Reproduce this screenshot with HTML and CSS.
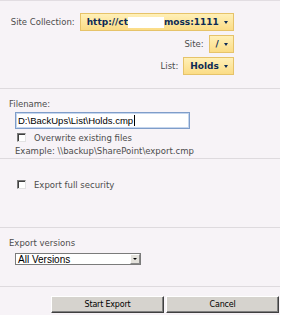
FILE: index.html
```html
<!DOCTYPE html>
<html>
<head>
<meta charset="utf-8">
<link rel="stylesheet" href="styles.css">
</head>
<body>
<div class="panel">
  <div class="section sel-section">
    <div class="sel-row">
      <span class="lbl">Site Collection:</span>
      <span class="ybtn">http://ct<span class="redact"></span>moss:1111 <span class="caret"></span></span>
    </div>
    <div class="sel-row">
      <span class="lbl">Site:</span>
      <span class="ybtn">/ <span class="caret"></span></span>
    </div>
    <div class="sel-row">
      <span class="lbl">List:</span>
      <span class="ybtn">Holds <span class="caret"></span></span>
    </div>
  </div>
  <div class="section file-section">
    <div class="lbl">Filename:</div>
    <div class="input">D:\BackUps\List\Holds.cmp<span class="cursor"></span></div>
    <div class="check-row"><span class="cb"></span><span class="lbl">Overwrite existing files</span></div>
    <div class="lbl example">Example: \\backup\SharePoint\export.cmp</div>
  </div>
  <div class="section sec-section">
    <div class="check-row"><span class="cb"></span><span class="lbl">Export full security</span></div>
  </div>
  <div class="section ver-section">
    <div class="lbl">Export versions</div>
    <div class="select"><span class="sel-text">All Versions</span><span class="sel-arrow"><span class="tri"></span></span></div>
  </div>
  <div class="buttons">
    <span class="gbtn start">Start Export</span>
    <span class="gbtn cancel">Cancel</span>
  </div>
</div>
</body>
</html>
```
FILE: styles.css
```css
html, body {
  margin: 0;
  padding: 0;
  background: #ffffff;
}
.panel {
  width: 280px;
  height: 315px;
  background: #f7f3f7;
  border-top: 1px solid #e2dde2;
  box-sizing: border-box;
  font-family: "DejaVu Sans", Verdana, sans-serif;
  font-size: 8.5px;
  color: #4c4c4c;
  display: flex;
  flex-direction: column;
}
.section {
  border-bottom: 1px solid #dedade;
  box-sizing: border-box;
}
.sel-section {
  height: 88px;
  padding: 12px 46px 0 0;
  display: flex;
  flex-direction: column;
  align-items: flex-end;
  gap: 4px;
}
.sel-row {
  display: flex;
  align-items: center;
  gap: 5px;
}
.ybtn {
  height: 18px;
  box-sizing: border-box;
  border: 1px solid #e6c36a;
  background: linear-gradient(#fff0b8, #fbdc86);
  padding: 0 5px 0 6px;
  display: flex;
  align-items: center;
  font-family: "DejaVu Sans", Verdana, sans-serif;
  font-weight: bold;
  font-size: 9px;
  color: #0c2a55;
  white-space: pre;
}
.redact {
  display: inline-block;
  width: 36px;
  height: 11px;
  background: #ffffff;
}
.caret {
  display: inline-block;
  width: 0;
  height: 0;
  border-left: 2.5px solid transparent;
  border-right: 2.5px solid transparent;
  border-top: 3px solid #0c2a55;
  margin-left: 2px;
}
.file-section {
  height: 70px;
  padding: 10px 0 0 9px;
  display: flex;
  flex-direction: column;
}
.input {
  margin: 3px 0 0 6px;
  width: 175px;
  height: 17px;
  box-sizing: border-box;
  border: 1px solid #7f9dc9;
  box-shadow: inset 0 0 0 1px #c5d6ee;
  background: #ffffff;
  font-family: "Liberation Sans", Arial, sans-serif;
  font-size: 9.5px;
  color: #000000;
  display: flex;
  align-items: center;
  padding-left: 2px;
}
.cursor {
  display: inline-block;
  width: 1px;
  height: 11px;
  background: #000;
  margin-left: 1px;
}
.check-row {
  display: flex;
  align-items: center;
  gap: 8px;
  margin-left: 8px;
  height: 13px;
  margin-top: 2px;
}
.cb {
  width: 9px;
  height: 9px;
  box-sizing: border-box;
  background: #ffffff;
  border-top: 1px solid #7a7a7a;
  border-left: 1px solid #7a7a7a;
  border-right: 1px solid #e2e2e2;
  border-bottom: 1px solid #e2e2e2;
  box-shadow: inset 1px 1px 0 #404040;
}
.example {
  margin: 2px 0 0 6px;
}
.sec-section {
  height: 69px;
  padding: 17px 0 0 9px;
}
.ver-section {
  height: 59px;
  padding: 10px 0 0 9px;
}
.select {
  margin: 5px 0 0 6px;
  width: 126px;
  height: 12px;
  box-sizing: border-box;
  border: 1px solid #7b7b7b;
  background: #ffffff;
  display: flex;
  align-items: center;
  justify-content: space-between;
}
.sel-text {
  font-family: "Liberation Sans", Arial, sans-serif;
  font-size: 10px;
  color: #000;
  padding-left: 2px;
}
.sel-arrow {
  width: 10px;
  height: 10px;
  box-sizing: border-box;
  background: #e4e2dc;
  border: 1px solid #ffffff;
  border-right-color: #8a8a8a;
  border-bottom-color: #8a8a8a;
  display: flex;
  align-items: center;
  justify-content: center;
}
.tri {
  width: 0;
  height: 0;
  border-left: 2px solid transparent;
  border-right: 2px solid transparent;
  border-top: 2px solid #000;
}
.buttons {
  display: flex;
  justify-content: flex-end;
  gap: 2px;
  padding: 9px 1px 0 0;
}
.gbtn {
  width: 113px;
  height: 17px;
  box-sizing: border-box;
  background: #d6d3ce;
  border: 1px solid #ffffff;
  border-right-color: #404040;
  border-bottom-color: #404040;
  box-shadow: inset -1px -1px 0 #808080;
  display: flex;
  align-items: center;
  justify-content: center;
  font-family: "DejaVu Sans", Tahoma, sans-serif;
  font-size: 8px;
  letter-spacing: -0.2px;
  color: #000;
}
```
